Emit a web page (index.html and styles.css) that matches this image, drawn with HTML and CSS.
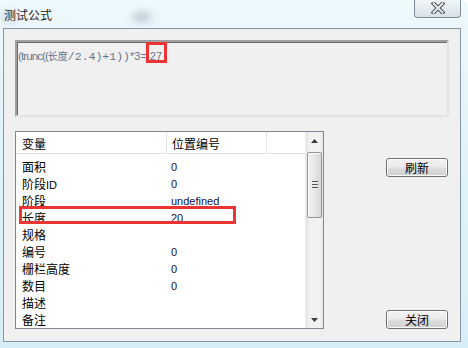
FILE: index.html
```html
<!DOCTYPE html>
<html>
<head>
<meta charset="utf-8">
<link rel="stylesheet" href="styles.css">
</head>
<body>
<div class="window">
  <div class="titlebar">
    <span class="title">测试公式</span>
    <div class="blur blur1"></div>
    <div class="blur blur2"></div>
    <div class="close">
      <svg width="14" height="12" viewBox="0 0 14 12">
        <path d="M2.5 1.5 L11.5 10.5 M11.5 1.5 L2.5 10.5" stroke="#4a4f55" stroke-width="4" stroke-linecap="square"/>
        <path d="M2.5 1.5 L11.5 10.5 M11.5 1.5 L2.5 10.5" stroke="#e8eaec" stroke-width="2" stroke-linecap="square"/>
      </svg>
    </div>
  </div>
  <div class="client">
    <div class="formula"><span class="f-a">(trunc((</span><span class="f-b">长度</span><span class="f-c">/2.4)+1))</span><span class="f-d">*3=</span><span class="f-e">27</span></div>
    <div class="lower">
      <div class="list">
        <div class="list-main">
          <div class="header">
            <div class="c1">变量</div>
            <div class="c2">位置编号</div>
            <div class="c3"></div>
          </div>
          <div class="rows">
            <div class="row"><span class="v1">面积</span><span class="v2">0</span></div>
            <div class="row"><span class="v1">阶段<span class="lat">ID</span></span><span class="v2">0</span></div>
            <div class="row"><span class="v1">阶段</span><span class="v2">undefined</span></div>
            <div class="row"><span class="v1">长度</span><span class="v2">20</span></div>
            <div class="row"><span class="v1">规格</span><span class="v2"></span></div>
            <div class="row"><span class="v1">编号</span><span class="v2">0</span></div>
            <div class="row"><span class="v1">栅栏高度</span><span class="v2">0</span></div>
            <div class="row"><span class="v1">数目</span><span class="v2">0</span></div>
            <div class="row"><span class="v1">描述</span><span class="v2"></span></div>
            <div class="row"><span class="v1">备注</span><span class="v2"></span></div>
          </div>
        </div>
        <div class="scrollbar">
          <div class="arrow up"><svg width="7" height="4" viewBox="0 0 7 4"><path d="M0 4 L3.5 0 L7 4 Z" fill="#3c3c3c"/></svg></div>
          <div class="thumb"><span></span><span></span><span></span></div>
          <div class="track"></div>
          <div class="arrow down"><svg width="7" height="4" viewBox="0 0 7 4"><path d="M0 0 L3.5 4 L7 0 Z" fill="#3c3c3c"/></svg></div>
        </div>
      </div>
      <div class="buttons">
        <div class="btn">刷新</div>
        <div class="btn">关闭</div>
      </div>
    </div>
  </div>
  <div class="mark mark-result"></div>
  <div class="mark mark-row"></div>
</div>
</body>
</html>
```

FILE: styles.css
```css
html, body {
  margin: 0;
  padding: 0;
}
body {
  width: 468px;
  height: 348px;
  overflow: hidden;
  font-family: "Noto Sans CJK SC", sans-serif;
}
.window {
  position: relative;
  width: 468px;
  height: 348px;
  background: linear-gradient(180deg, #eef9fc 0%, #e2f3f9 40%, #d8eef6 100%);
  display: flex;
  flex-direction: column;
  border-top-right-radius: 8px;
}
.titlebar {
  position: relative;
  height: 28px;
  flex: none;
}
.title {
  position: absolute;
  left: 4px;
  top: 7px;
  font-size: 12px;
  line-height: 16px;
  color: #1c1c1c;
  text-shadow: 0 0 6px #ffffff, 0 0 3px #ffffff;
}
.blur {
  position: absolute;
  border-radius: 50%;
  filter: blur(4px);
}
.blur1 {
  left: 132px;
  top: 13px;
  width: 20px;
  height: 8px;
  background: rgba(60, 80, 110, 0.35);
}
.blur2 {
  left: 0;
  top: 12px;
  width: 18px;
  height: 10px;
  background: rgba(90, 110, 140, 0.25);
}
.close {
  position: absolute;
  left: 414px;
  top: -1px;
  width: 45px;
  height: 18px;
  border: 1px solid #7d8994;
  border-top: none;
  border-radius: 0 0 4px 4px;
  background: linear-gradient(180deg, #f4f8fa 0%, #e4ecf1 50%, #d7e2e9 100%);
  display: flex;
  align-items: center;
  justify-content: center;
}
.client {
  margin: 0 7px 0 3px;
  border: 1px solid #8896a3;
  background: #f0f0f0;
  display: flex;
  flex-direction: column;
  padding: 11px 0 0 11px;
  box-sizing: border-box;
  height: 314px;
  flex: none;
}
.formula {
  width: 434px;
  height: 77px;
  box-sizing: border-box;
  border: 2px solid;
  border-color: #a0a0a0 #e3e3e3 #e3e3e3 #a0a0a0;
  box-shadow: inset 1px 1px 0 #696969;
  background: #f0f0f0;
  padding: 3px 0 0 1px;
  color: #66758f;
  white-space: nowrap;
  line-height: 16px;
}
.f-a {
  font-family: "Liberation Sans", sans-serif;
  font-size: 11.5px;
  letter-spacing: -0.9px;
}
.f-b {
  font-family: "Noto Sans CJK SC", sans-serif;
  font-size: 10px;
}
.f-c {
  font-family: "Liberation Mono", monospace;
  font-size: 11.5px;
}
.f-d {
  font-family: "Liberation Sans", sans-serif;
  font-size: 11px;
}
.f-e {
  font-family: "Liberation Sans", sans-serif;
  font-size: 11px;
  padding-left: 3px;
}
.lower {
  margin-top: 14px;
  display: flex;
  align-items: flex-start;
}
.list {
  width: 309px;
  height: 198px;
  box-sizing: border-box;
  border: 1px solid #828790;
  background: #ffffff;
  display: flex;
}
.list-main {
  flex: 1;
  display: flex;
  flex-direction: column;
  overflow: hidden;
}
.header {
  display: flex;
  height: 22px;
  box-sizing: border-box;
  border-bottom: 1px solid #e5e5e5;
  flex: none;
  font-size: 12px;
  line-height: 18px;
  padding-top: 3px;
  color: #000;
}
.header .c1 {
  width: 144px;
  padding-left: 6px;
  border-right: 1px solid #e5e5e5;
  margin-top: -3px;
  padding-top: 3px;
}
.header .c2 {
  width: 94px;
  padding-left: 5px;
  border-right: 1px solid #e5e5e5;
  margin-top: -3px;
  padding-top: 3px;
}
.header .c3 {
  flex: 1;
}
.rows {
  padding-top: 4px;
  display: flex;
  flex-direction: column;
}
.row {
  display: flex;
  height: 17px;
  line-height: 18px;
  font-size: 12px;
  color: #000;
  flex: none;
}
.v1 {
  width: 150px;
  padding-left: 6px;
  box-sizing: border-box;
}
.lat {
  font-family: "Liberation Sans", sans-serif;
  font-size: 11px;
}
.v2 {
  padding-left: 5px;
  font-family: "Liberation Sans", sans-serif;
  font-size: 11px;
  color: #10103a;
}
.scrollbar {
  width: 17px;
  flex: none;
  display: flex;
  flex-direction: column;
  background: linear-gradient(90deg, #e3e3e3 0%, #f0f0f0 20%, #f3f3f3 80%, #e8e8e8 100%);
  border-left: 1px solid #ececec;
}
.arrow {
  height: 17px;
  display: flex;
  align-items: center;
  justify-content: center;
  flex: none;
}
.thumb {
  margin: 3px 1px 0 1px;
  height: 64px;
  flex: none;
  border: 1px solid #959595;
  border-radius: 2px;
  background: linear-gradient(90deg, #f3f3f3 0%, #e8e8e8 50%, #d6d6d6 100%);
  box-shadow: inset 1px 1px 0 #fafafa;
  display: flex;
  flex-direction: column;
  align-items: center;
  justify-content: center;
  gap: 1px;
}
.thumb span {
  display: block;
  width: 6px;
  height: 1px;
  background: #4f4f4f;
  border-bottom: 1px solid #f4f4f4;
}
.track {
  flex: 1;
}
.buttons {
  margin-left: 62px;
  padding-top: 27px;
  display: flex;
  flex-direction: column;
  gap: 133px;
}
.btn {
  width: 62px;
  height: 19px;
  box-sizing: border-box;
  border: 1px solid #707070;
  border-radius: 3px;
  background: linear-gradient(180deg, #f2f2f2 0%, #ebebeb 48%, #dddddd 52%, #cfcfcf 100%);
  box-shadow: inset 0 0 0 1px #fcfcfc;
  font-size: 12px;
  line-height: 17px;
  text-align: center;
  color: #000;
}
.mark {
  position: absolute;
  border: 3px solid #ec3434;
  box-sizing: border-box;
}
.mark-result {
  left: 146px;
  top: 42px;
  width: 21px;
  height: 21px;
}
.mark-row {
  left: 19px;
  top: 206px;
  width: 217px;
  height: 18px;
}
```
